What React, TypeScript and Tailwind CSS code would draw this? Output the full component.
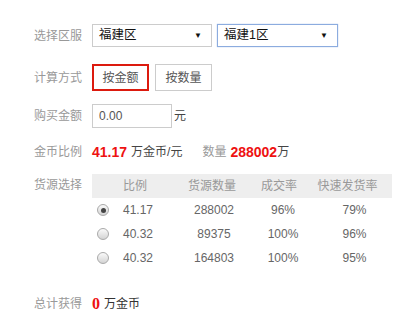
import React, { useState } from 'react'

const rows = [
  { ratio: '41.17', qty: '288002', deal: '96%', fast: '79%' },
  { ratio: '40.32', qty: '89375', deal: '100%', fast: '96%' },
  { ratio: '40.32', qty: '164803', deal: '100%', fast: '95%' },
]

function Radio({ checked }: { checked: boolean }) {
  return (
    <span className="flex h-[12px] w-[12px] items-center justify-center rounded-full border border-[#a9a9a9] bg-gradient-to-b from-[#fafafa] to-[#d4d4d4]">
      {checked && <span className="h-[5px] w-[5px] rounded-full bg-[#444]" />}
    </span>
  )
}

function Label({ children }: { children: React.ReactNode }) {
  return <div className="w-[58px] shrink-0 text-[12px] text-[#999]">{children}</div>
}

export default function App() {
  const [mode, setMode] = useState<'amount' | 'qty'>('amount')
  const [picked, setPicked] = useState(0)

  return (
    <div
      className="h-[316px] w-[413px] bg-white pl-[34px] pt-[24px] text-[12px] text-[#333]"
      style={{ fontFamily: '"Liberation Sans", "Noto Sans CJK SC", sans-serif' }}
    >
      {/* server */}
      <div className="flex h-[23px] items-center">
        <Label>选择区服</Label>
        <div className="flex gap-[5px]">
          <div className="flex h-[23px] w-[120px] items-center justify-between border border-[#cccccc] pl-[6px] pr-[9px] text-[12.5px] text-[#111]">
            <span>福建区</span>
            <span className="text-[8px]">▼</span>
          </div>
          <div className="flex h-[23px] w-[121px] items-center justify-between border border-[#8cacdf] pl-[6px] pr-[9px] text-[12.5px] text-[#111] shadow-[0_0_1px_#9bb8e6]">
            <span>福建1区</span>
            <span className="text-[8px]">▼</span>
          </div>
        </div>
      </div>

      {/* mode */}
      <div className="mt-[17px] flex h-[27px] items-start">
        <div className="pt-[5px]">
          <Label>计算方式</Label>
        </div>
        <div className="flex gap-[6px]">
          <button
            onClick={() => setMode('amount')}
            className={
              mode === 'amount'
                ? 'flex h-[27px] w-[57px] items-center justify-center border-2 border-[#dc1a0e] text-[12px] text-[#555]'
                : 'flex h-[27px] w-[57px] items-center justify-center border border-[#cccccc] text-[12px] text-[#555]'
            }
          >
            按金额
          </button>
          <button
            onClick={() => setMode('qty')}
            className={
              mode === 'qty'
                ? 'flex h-[27px] w-[57px] items-center justify-center border-2 border-[#dc1a0e] text-[12px] text-[#555]'
                : 'flex h-[27px] w-[57px] items-center justify-center border border-[#cccccc] text-[12px] text-[#555]'
            }
          >
            按数量
          </button>
        </div>
      </div>

      {/* amount */}
      <div className="mt-[13px] flex h-[24px] items-center">
        <Label>购买金额</Label>
        <input
          defaultValue="0.00"
          className="h-[24px] w-[80px] border border-[#cccccc] px-[6px] text-[12px] text-[#555] outline-none"
        />
        <span className="ml-[2px] text-[12px] text-[#444]">元</span>
      </div>

      {/* ratio */}
      <div className="mt-[12px] flex h-[24px] items-center">
        <Label>金币比例</Label>
        <span className="text-[14px] font-bold text-[#ee1111]">41.17</span>
        <span className="ml-[4px] text-[12px] text-[#444]">万金币/元</span>
        <span className="ml-[20px] text-[12px] text-[#999]">数量</span>
        <span className="ml-[4px] text-[14px] font-bold text-[#ee1111]">288002</span>
        <span className="text-[12px] text-[#444]">万</span>
      </div>

      {/* source */}
      <div className="mt-[10px] flex items-start">
        <div className="pt-[2px]">
          <Label>货源选择</Label>
        </div>
        <div className="w-[300px]">
          <div className="grid h-[24px] grid-cols-[31px_56px_74px_64px_75px] items-center bg-[#eeeeee] text-[12px] text-[#999]">
            <span />
            <span>比例</span>
            <span className="pr-[8px] text-center">货源数量</span>
            <span className="pr-[12px] text-center">成交率</span>
            <span className="pr-[14px] text-center">快速发货率</span>
          </div>
          {rows.map((r, i) => (
            <div
              key={i}
              onClick={() => setPicked(i)}
              className="grid h-[24px] grid-cols-[31px_56px_74px_64px_75px] items-center text-[12px] text-[#666]"
            >
              <span className="pl-[5px]">
                <Radio checked={picked === i} />
              </span>
              <span>{r.ratio}</span>
              <span className="pr-[4px] text-center">{r.qty}</span>
              <span className="pr-[4px] text-center">{r.deal}</span>
              <span className="text-center">{r.fast}</span>
            </div>
          ))}
        </div>
      </div>

      {/* total */}
      <div className="mt-[22px] flex h-[24px] items-center">
        <Label>总计获得</Label>
        <span
          className="text-[16px] font-bold text-[#ee1111]"
          style={{ fontFamily: '"Liberation Serif", serif' }}
        >
          0
        </span>
        <span className="ml-[4px] text-[12px] text-[#333]">万金币</span>
      </div>
    </div>
  )
}
